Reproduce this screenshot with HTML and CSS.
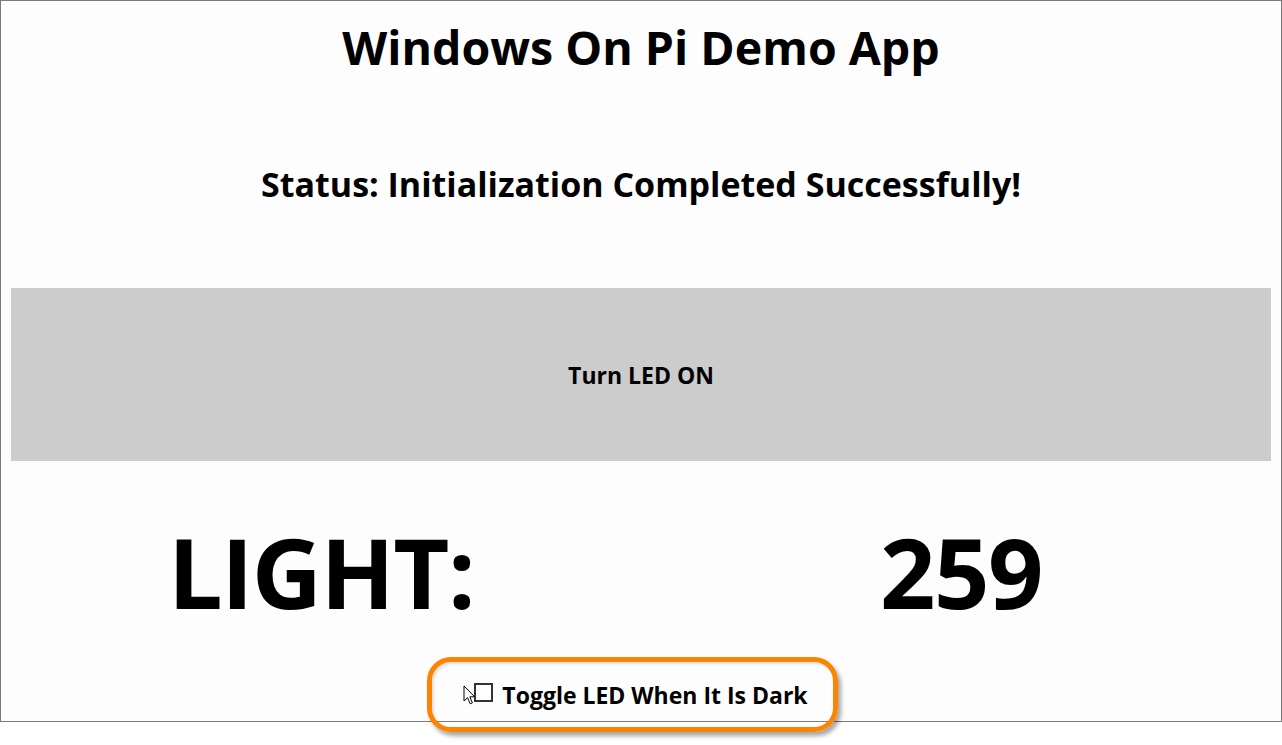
FILE: index.html
```html
<!DOCTYPE html>
<html lang="en">
<head>
<meta charset="utf-8">
<title>Windows On Pi Demo App</title>
<link rel="stylesheet" href="styles.css">
</head>
<body>
<div class="window">
  <h1 class="title">Windows On Pi Demo App</h1>
  <p class="status">Status: Initialization Completed Successfully!</p>
  <button class="led-btn" type="button">Turn LED ON</button>
  <div class="light-row">
    <span class="light-cell">LIGHT:</span>
    <span class="light-cell">259</span>
  </div>
  <label class="toggle">
    <span class="box"></span>
    <span class="toggle-text">Toggle LED When It Is Dark</span>
    <svg class="cursor" width="13" height="21" viewBox="0 0 13 21" aria-hidden="true">
      <path d="M1 1 L1 16 L4.5 12.6 L7.2 18.8 L9.4 17.9 L6.8 11.8 L11.6 11.8 Z" fill="#fff" stroke="#000" stroke-width="1" stroke-linejoin="miter"/>
    </svg>
  </label>
</div>
<div class="callout"></div>
</body>
</html>
```

FILE: styles.css
```css
html, body {
  margin: 0;
  padding: 0;
  background: #ffffff;
}

body {
  width: 1282px;
  height: 745px;
  position: relative;
  overflow: hidden;
  font-family: "Open Sans", "Noto Sans", sans-serif;
  color: #000;
}

.window {
  box-sizing: border-box;
  width: 1282px;
  height: 722px;
  border: 1px solid #7a7a7a;
  background: #fdfdfd;
  display: flex;
  flex-direction: column;
  align-items: stretch;
}

.title {
  margin: 16px 0 0;
  height: 60px;
  line-height: 60px;
  font-size: 46.5px;
  font-weight: 700;
  text-align: center;
}

.status {
  margin: 82px 0 0;
  height: 50px;
  line-height: 50px;
  font-size: 34px;
  font-weight: 700;
  text-align: center;
}

.led-btn {
  margin: 79px 10px 0;
  height: 173px;
  border: none;
  background: #cccccc;
  font-family: inherit;
  font-size: 23px;
  font-weight: 700;
  color: #000;
  padding: 0;
}

.light-row {
  margin-top: 50px;
  height: 120px;
  display: grid;
  grid-template-columns: 1fr 1fr;
  line-height: 120px;
  font-size: 97px;
  font-weight: 700;
}

.light-cell {
  text-align: center;
  letter-spacing: -1.5px;
}

.toggle {
  margin-top: 49px;
  height: 30px;
  line-height: 30px;
  display: flex;
  justify-content: center;
  align-items: center;
  gap: 9px;
  font-size: 23px;
  font-weight: 700;
  position: relative;
}

.box {
  box-sizing: border-box;
  width: 19px;
  height: 19px;
  border: 2px solid #333;
  background: #fff;
  margin-top: -6px;
}

.cursor {
  position: absolute;
  left: 462px;
  top: 5px;
}

.callout {
  position: absolute;
  left: 427px;
  top: 657px;
  width: 411px;
  height: 75px;
  box-sizing: border-box;
  border: 5px solid #fb8500;
  border-radius: 24px;
  box-shadow: 3px 4px 4px rgba(0, 0, 0, 0.35), inset 2px 2px 3px rgba(0, 0, 0, 0.12);
}
```
